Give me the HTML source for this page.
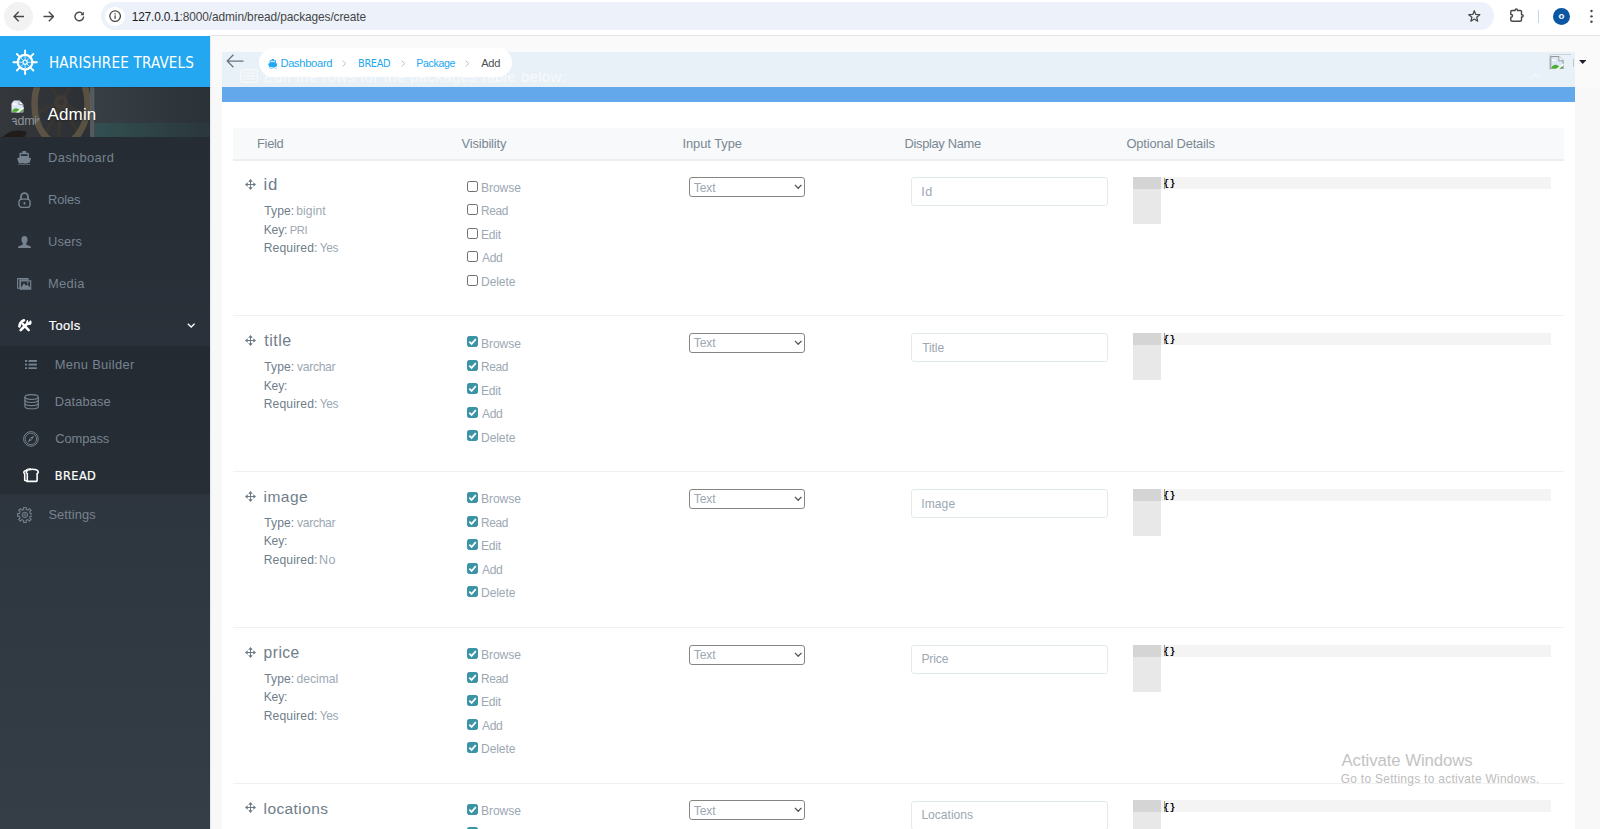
<!DOCTYPE html>
<html lang="en">
<head>
<meta charset="utf-8">
<title>Voyager - BREAD Package Add</title>
<style>
*{box-sizing:border-box;margin:0;padding:0}
html,body{width:1600px;height:829px;overflow:hidden}
body{font-family:"Liberation Sans",sans-serif;background:#f8f8f8;color:#76838f;position:relative;font-size:12px}
div,span,svg{position:absolute}
span{white-space:nowrap;line-height:20px}
/* browser chrome */
#chrome{left:0;top:0;width:1600px;height:36px;background:#fff}
#chromeline{left:210px;top:35px;width:1390px;height:1px;background:#e4e4e4}
#backbg{left:4px;top:2px;width:29px;height:29px;border-radius:50%;background:#f2f2f2}
#urlbar{left:101px;top:2px;width:1393px;height:28px;border-radius:14px;background:#edf1fa}
#infobg{left:105px;top:6.5px;width:19.5px;height:19.5px;border-radius:50%;background:#fff}
#profile{left:1552.5px;top:7.5px;width:17px;height:17px;border-radius:50%;background:#0b57a4}
#sep{left:1538px;top:10px;width:1px;height:13px;background:#c3d5f3}
/* sidebar */
#side{left:0;top:36px;width:210px;height:793px;background:linear-gradient(180deg,#232a32 0px,#252c34 102px,#353d47 793px);box-shadow:1px 0 1px rgba(0,0,0,.06)}
#brand{left:0;top:36px;width:210px;height:50.8px;background:#22a7f0}
#user{left:0;top:86px;width:210px;height:50.6px;background:#23292f;overflow:hidden}
#sub{left:0;top:346px;width:210px;height:148px;background:rgba(0,0,0,.13)}
/* main */
#panel{left:222px;top:52px;width:1353px;height:777px;background:#fff}
#phead{left:222px;top:52px;width:1353px;height:50px;background:#62a8ea}
#navov{left:210px;top:36px;width:1390px;height:50.8px;background:rgba(249,249,249,.885)}
#crumb{left:258.7px;top:47.8px;width:253.8px;height:29.2px;border-radius:14.6px;background:#fff}
#thead{left:233px;top:128px;width:1331px;height:33px;background:#f7f9fb;border-bottom:2px solid #eceff1}
.rs{left:233px;width:1331px;height:1px;background:#f0f0f0}
.cb{width:11px;height:11px;border:1px solid #6f6f6f;border-radius:2.2px;background:#fff}
.cb.on{background:#3b93a6;border-color:#3b93a6}
.sel{width:116px;height:20px;border:1px solid #858585;border-radius:3px;background:#fff}
.inp{width:196.6px;height:29px;border:1px solid #e2eaec;border-radius:3px;background:#fff}
.gut{width:27.6px;height:47px;background:#e8e8e8}
.gl{width:27.6px;height:12px;background:#d5d5d5}
.al{width:390.4px;height:12px;background:#f4f4f4}
.cur{width:1px;height:11px;background:#9a9a9a}
</style>
</head>
<body>

<div id="panel"></div><div id="phead"></div>
<svg style="left:239.5px;top:69px" width="18" height="14" viewBox="0 0 18 14"><g opacity=".8"><rect x=".7" y=".7" width="16.6" height="12.6" rx="1.5" fill="none" stroke="#fff" stroke-width="1.4"/><path d="M3 4.2H15M3 7H15M3 9.8H15" stroke="#fff" stroke-width="1.3"/></g></svg>
<span style="left:263.81px;top:67.00px;font-size:14.87px;letter-spacing:0.452px;color:rgba(255,255,255,.85);">Edit the rows for the packages table below:</span>
<svg style="left:1530px;top:73px" width="10" height="6" viewBox="0 0 10 6"><path d="M1 5 L5 1 L9 5" fill="none" stroke="#fff" stroke-width="1.4" opacity=".6"/></svg>
<div id="thead"></div>
<span style="left:256.97px;top:134.00px;font-size:12.9px;letter-spacing:-0.281px;color:#7a8792;">Field</span>
<span style="left:461.57px;top:134.00px;font-size:12.9px;letter-spacing:-0.171px;color:#7a8792;">Visibility</span>
<span style="left:682.44px;top:134.00px;font-size:12.9px;letter-spacing:-0.053px;color:#7a8792;">Input Type</span>
<span style="left:904.57px;top:134.00px;font-size:12.9px;letter-spacing:-0.335px;color:#7a8792;">Display Name</span>
<span style="left:1126.42px;top:134.00px;font-size:12.9px;letter-spacing:-0.163px;color:#7a8792;">Optional Details</span>
<svg style="left:245.2px;top:179.1px" viewBox="0 0 12 12" width="11" height="11"><path d="M6 0L8.500 2.900H6.550V5.450H9.100V3.500L12 6L9.100 8.500V6.550H6.550V9.100H8.500L6 12L3.500 9.100H5.450V6.550H2.900V8.500L0 6L2.900 3.500V5.450H5.450V2.900H3.500Z" fill="#6c7a86"/></svg>
<span style="left:263.50px;top:175.00px;font-size:16.89px;letter-spacing:0.821px;color:#707e8a;">id</span>
<span style="left:264.36px;top:201.00px;font-size:12.1px;letter-spacing:0.037px;color:#707e8a;">Type:</span>
<span style="left:296.24px;top:201.00px;font-size:12.1px;letter-spacing:0.100px;color:#9ca8b3;">bigint</span>
<span style="left:263.63px;top:220.00px;font-size:12.1px;letter-spacing:-0.114px;color:#707e8a;">Key:</span>
<span style="left:289.71px;top:220.00px;font-size:11.15px;letter-spacing:-0.349px;color:#9ca8b3;">PRI</span>
<span style="left:263.63px;top:238.00px;font-size:12.1px;letter-spacing:0.175px;color:#707e8a;">Required:</span>
<span style="left:319.76px;top:238.00px;font-size:11.85px;letter-spacing:-0.347px;color:#9ca8b3;">Yes</span>
<div class="cb" style="left:467px;top:180.6px"></div>
<span style="left:481.03px;top:178.00px;font-size:12.1px;letter-spacing:-0.088px;color:#9ca8b3;">Browse</span>
<div class="cb" style="left:467px;top:204.1px"></div>
<span style="left:481.05px;top:201.00px;font-size:11.86px;letter-spacing:-0.352px;color:#9ca8b3;">Read</span>
<div class="cb" style="left:467px;top:227.6px"></div>
<span style="left:481.03px;top:225.00px;font-size:12.1px;letter-spacing:-0.271px;color:#9ca8b3;">Edit</span>
<div class="cb" style="left:467px;top:251.1px"></div>
<span style="left:482.00px;top:248.00px;font-size:12.07px;letter-spacing:-0.350px;color:#9ca8b3;">Add</span>
<div class="cb" style="left:467px;top:274.6px"></div>
<span style="left:481.03px;top:272.00px;font-size:12.1px;letter-spacing:-0.097px;color:#9ca8b3;">Delete</span>
<div class="sel" style="left:689px;top:177.0px"><svg style="left:104px;top:6px" viewBox="0 0 9 6" width="8.4" height="5.6"><path d="M1 1 L4.5 4.6 L8 1" fill="none" stroke="#505050" stroke-width="1.350"/></svg></div>
<span style="left:693.76px;top:178.00px;font-size:12.1px;letter-spacing:-0.090px;color:#9ca8b3;">Text</span>
<div class="inp" style="left:911px;top:177.3px"></div>
<span style="left:921.27px;top:182.00px;font-size:12.57px;letter-spacing:0.452px;color:#9ca8b3;">Id</span>
<div class="gut" style="left:1133px;top:177.0px"></div><div class="gl" style="left:1133px;top:177.0px"></div><div class="al" style="left:1160.6px;top:177.0px"></div><div class="cur" style="left:1164px;top:177.5px"></div>
<span style="left:1163.41px;top:174.00px;font-size:9.6px;letter-spacing:0.356px;color:#000;font-family:'Liberation Mono',monospace;font-weight:bold;">{}</span>
<div class="rs" style="top:315.2px"></div>
<svg style="left:245.2px;top:334.9px" viewBox="0 0 12 12" width="11" height="11"><path d="M6 0L8.500 2.900H6.550V5.450H9.100V3.500L12 6L9.100 8.500V6.550H6.550V9.100H8.500L6 12L3.500 9.100H5.450V6.550H2.900V8.500L0 6L2.900 3.500V5.450H5.450V2.900H3.500Z" fill="#6c7a86"/></svg>
<span style="left:264.36px;top:330.00px;font-size:16.03px;letter-spacing:0.449px;color:#707e8a;">title</span>
<span style="left:264.36px;top:357.00px;font-size:12.1px;letter-spacing:0.037px;color:#707e8a;">Type:</span>
<span style="left:296.97px;top:357.00px;font-size:12.1px;letter-spacing:-0.290px;color:#9ca8b3;">varchar</span>
<span style="left:263.63px;top:376.00px;font-size:12.1px;letter-spacing:-0.114px;color:#707e8a;">Key:</span>
<span style="left:263.63px;top:394.00px;font-size:12.1px;letter-spacing:0.175px;color:#707e8a;">Required:</span>
<span style="left:319.76px;top:394.00px;font-size:11.85px;letter-spacing:-0.347px;color:#9ca8b3;">Yes</span>
<div class="cb on" style="left:467px;top:336.4px"><svg style="left:-1px;top:-1px" viewBox="0 0 11 11" width="11" height="11"><path d="M2.3 5.6 L4.6 7.9 L8.8 3.1" fill="none" stroke="#fff" stroke-width="1.7"/></svg></div>
<span style="left:481.03px;top:334.00px;font-size:12.1px;letter-spacing:-0.088px;color:#9ca8b3;">Browse</span>
<div class="cb on" style="left:467px;top:359.9px"><svg style="left:-1px;top:-1px" viewBox="0 0 11 11" width="11" height="11"><path d="M2.3 5.6 L4.6 7.9 L8.8 3.1" fill="none" stroke="#fff" stroke-width="1.7"/></svg></div>
<span style="left:481.05px;top:357.00px;font-size:11.86px;letter-spacing:-0.352px;color:#9ca8b3;">Read</span>
<div class="cb on" style="left:467px;top:383.4px"><svg style="left:-1px;top:-1px" viewBox="0 0 11 11" width="11" height="11"><path d="M2.3 5.6 L4.6 7.9 L8.8 3.1" fill="none" stroke="#fff" stroke-width="1.7"/></svg></div>
<span style="left:481.03px;top:381.00px;font-size:12.1px;letter-spacing:-0.271px;color:#9ca8b3;">Edit</span>
<div class="cb on" style="left:467px;top:406.9px"><svg style="left:-1px;top:-1px" viewBox="0 0 11 11" width="11" height="11"><path d="M2.3 5.6 L4.6 7.9 L8.8 3.1" fill="none" stroke="#fff" stroke-width="1.7"/></svg></div>
<span style="left:482.00px;top:404.00px;font-size:12.07px;letter-spacing:-0.350px;color:#9ca8b3;">Add</span>
<div class="cb on" style="left:467px;top:430.4px"><svg style="left:-1px;top:-1px" viewBox="0 0 11 11" width="11" height="11"><path d="M2.3 5.6 L4.6 7.9 L8.8 3.1" fill="none" stroke="#fff" stroke-width="1.7"/></svg></div>
<span style="left:481.03px;top:428.00px;font-size:12.1px;letter-spacing:-0.097px;color:#9ca8b3;">Delete</span>
<div class="sel" style="left:689px;top:332.8px"><svg style="left:104px;top:6px" viewBox="0 0 9 6" width="8.4" height="5.6"><path d="M1 1 L4.5 4.6 L8 1" fill="none" stroke="#505050" stroke-width="1.350"/></svg></div>
<span style="left:693.76px;top:333.00px;font-size:12.1px;letter-spacing:-0.090px;color:#9ca8b3;">Text</span>
<div class="inp" style="left:911px;top:333.1px"></div>
<span style="left:922.16px;top:338.00px;font-size:12.1px;letter-spacing:-0.107px;color:#9ca8b3;">Title</span>
<div class="gut" style="left:1133px;top:332.8px"></div><div class="gl" style="left:1133px;top:332.8px"></div><div class="al" style="left:1160.6px;top:332.8px"></div><div class="cur" style="left:1164px;top:333.3px"></div>
<span style="left:1163.41px;top:330.00px;font-size:9.6px;letter-spacing:0.356px;color:#000;font-family:'Liberation Mono',monospace;font-weight:bold;">{}</span>
<div class="rs" style="top:471.1px"></div>
<svg style="left:245.2px;top:490.8px" viewBox="0 0 12 12" width="11" height="11"><path d="M6 0L8.500 2.900H6.550V5.450H9.100V3.500L12 6L9.100 8.500V6.550H6.550V9.100H8.500L6 12L3.500 9.100H5.450V6.550H2.900V8.500L0 6L2.900 3.500V5.450H5.450V2.900H3.500Z" fill="#6c7a86"/></svg>
<span style="left:263.59px;top:487.00px;font-size:15.53px;letter-spacing:0.447px;color:#707e8a;">image</span>
<span style="left:264.36px;top:513.00px;font-size:12.1px;letter-spacing:0.037px;color:#707e8a;">Type:</span>
<span style="left:296.97px;top:513.00px;font-size:12.1px;letter-spacing:-0.290px;color:#9ca8b3;">varchar</span>
<span style="left:263.63px;top:531.00px;font-size:12.1px;letter-spacing:-0.114px;color:#707e8a;">Key:</span>
<span style="left:263.63px;top:550.00px;font-size:12.1px;letter-spacing:0.175px;color:#707e8a;">Required:</span>
<span style="left:318.99px;top:550.00px;font-size:12.57px;letter-spacing:0.450px;color:#9ca8b3;">No</span>
<div class="cb on" style="left:467px;top:492.3px"><svg style="left:-1px;top:-1px" viewBox="0 0 11 11" width="11" height="11"><path d="M2.3 5.6 L4.6 7.9 L8.8 3.1" fill="none" stroke="#fff" stroke-width="1.7"/></svg></div>
<span style="left:481.03px;top:489.00px;font-size:12.1px;letter-spacing:-0.088px;color:#9ca8b3;">Browse</span>
<div class="cb on" style="left:467px;top:515.8px"><svg style="left:-1px;top:-1px" viewBox="0 0 11 11" width="11" height="11"><path d="M2.3 5.6 L4.6 7.9 L8.8 3.1" fill="none" stroke="#fff" stroke-width="1.7"/></svg></div>
<span style="left:481.05px;top:513.00px;font-size:11.86px;letter-spacing:-0.352px;color:#9ca8b3;">Read</span>
<div class="cb on" style="left:467px;top:539.3px"><svg style="left:-1px;top:-1px" viewBox="0 0 11 11" width="11" height="11"><path d="M2.3 5.6 L4.6 7.9 L8.8 3.1" fill="none" stroke="#fff" stroke-width="1.7"/></svg></div>
<span style="left:481.03px;top:536.00px;font-size:12.1px;letter-spacing:-0.271px;color:#9ca8b3;">Edit</span>
<div class="cb on" style="left:467px;top:562.8px"><svg style="left:-1px;top:-1px" viewBox="0 0 11 11" width="11" height="11"><path d="M2.3 5.6 L4.6 7.9 L8.8 3.1" fill="none" stroke="#fff" stroke-width="1.7"/></svg></div>
<span style="left:482.00px;top:560.00px;font-size:12.07px;letter-spacing:-0.350px;color:#9ca8b3;">Add</span>
<div class="cb on" style="left:467px;top:586.3px"><svg style="left:-1px;top:-1px" viewBox="0 0 11 11" width="11" height="11"><path d="M2.3 5.6 L4.6 7.9 L8.8 3.1" fill="none" stroke="#fff" stroke-width="1.7"/></svg></div>
<span style="left:481.03px;top:583.00px;font-size:12.1px;letter-spacing:-0.097px;color:#9ca8b3;">Delete</span>
<div class="sel" style="left:689px;top:488.7px"><svg style="left:104px;top:6px" viewBox="0 0 9 6" width="8.4" height="5.6"><path d="M1 1 L4.5 4.6 L8 1" fill="none" stroke="#505050" stroke-width="1.350"/></svg></div>
<span style="left:693.76px;top:489.00px;font-size:12.1px;letter-spacing:-0.090px;color:#9ca8b3;">Text</span>
<div class="inp" style="left:911px;top:489.0px"></div>
<span style="left:921.31px;top:494.00px;font-size:12.1px;letter-spacing:0.049px;color:#9ca8b3;">Image</span>
<div class="gut" style="left:1133px;top:488.7px"></div><div class="gl" style="left:1133px;top:488.7px"></div><div class="al" style="left:1160.6px;top:488.7px"></div><div class="cur" style="left:1164px;top:489.2px"></div>
<span style="left:1163.41px;top:486.00px;font-size:9.6px;letter-spacing:0.356px;color:#000;font-family:'Liberation Mono',monospace;font-weight:bold;">{}</span>
<div class="rs" style="top:626.9px"></div>
<svg style="left:245.2px;top:646.6px" viewBox="0 0 12 12" width="11" height="11"><path d="M6 0L8.500 2.900H6.550V5.450H9.100V3.500L12 6L9.100 8.500V6.550H6.550V9.100H8.500L6 12L3.500 9.100H5.450V6.550H2.900V8.500L0 6L2.900 3.500V5.450H5.450V2.900H3.500Z" fill="#6c7a86"/></svg>
<span style="left:263.62px;top:643.00px;font-size:15.61px;letter-spacing:0.451px;color:#707e8a;">price</span>
<span style="left:264.36px;top:669.00px;font-size:12.1px;letter-spacing:0.037px;color:#707e8a;">Type:</span>
<span style="left:296.52px;top:669.00px;font-size:12.1px;letter-spacing:-0.002px;color:#9ca8b3;">decimal</span>
<span style="left:263.63px;top:687.00px;font-size:12.1px;letter-spacing:-0.114px;color:#707e8a;">Key:</span>
<span style="left:263.63px;top:706.00px;font-size:12.1px;letter-spacing:0.175px;color:#707e8a;">Required:</span>
<span style="left:319.76px;top:706.00px;font-size:11.85px;letter-spacing:-0.347px;color:#9ca8b3;">Yes</span>
<div class="cb on" style="left:467px;top:648.1px"><svg style="left:-1px;top:-1px" viewBox="0 0 11 11" width="11" height="11"><path d="M2.3 5.6 L4.6 7.9 L8.8 3.1" fill="none" stroke="#fff" stroke-width="1.7"/></svg></div>
<span style="left:481.03px;top:645.00px;font-size:12.1px;letter-spacing:-0.088px;color:#9ca8b3;">Browse</span>
<div class="cb on" style="left:467px;top:671.6px"><svg style="left:-1px;top:-1px" viewBox="0 0 11 11" width="11" height="11"><path d="M2.3 5.6 L4.6 7.9 L8.8 3.1" fill="none" stroke="#fff" stroke-width="1.7"/></svg></div>
<span style="left:481.05px;top:669.00px;font-size:11.86px;letter-spacing:-0.352px;color:#9ca8b3;">Read</span>
<div class="cb on" style="left:467px;top:695.1px"><svg style="left:-1px;top:-1px" viewBox="0 0 11 11" width="11" height="11"><path d="M2.3 5.6 L4.6 7.9 L8.8 3.1" fill="none" stroke="#fff" stroke-width="1.7"/></svg></div>
<span style="left:481.03px;top:692.00px;font-size:12.1px;letter-spacing:-0.271px;color:#9ca8b3;">Edit</span>
<div class="cb on" style="left:467px;top:718.6px"><svg style="left:-1px;top:-1px" viewBox="0 0 11 11" width="11" height="11"><path d="M2.3 5.6 L4.6 7.9 L8.8 3.1" fill="none" stroke="#fff" stroke-width="1.7"/></svg></div>
<span style="left:482.00px;top:716.00px;font-size:12.07px;letter-spacing:-0.350px;color:#9ca8b3;">Add</span>
<div class="cb on" style="left:467px;top:742.1px"><svg style="left:-1px;top:-1px" viewBox="0 0 11 11" width="11" height="11"><path d="M2.3 5.6 L4.6 7.9 L8.8 3.1" fill="none" stroke="#fff" stroke-width="1.7"/></svg></div>
<span style="left:481.03px;top:739.00px;font-size:12.1px;letter-spacing:-0.097px;color:#9ca8b3;">Delete</span>
<div class="sel" style="left:689px;top:644.5px"><svg style="left:104px;top:6px" viewBox="0 0 9 6" width="8.4" height="5.6"><path d="M1 1 L4.5 4.6 L8 1" fill="none" stroke="#505050" stroke-width="1.350"/></svg></div>
<span style="left:693.76px;top:645.00px;font-size:12.1px;letter-spacing:-0.090px;color:#9ca8b3;">Text</span>
<div class="inp" style="left:911px;top:644.8px"></div>
<span style="left:921.43px;top:649.00px;font-size:12.1px;letter-spacing:-0.119px;color:#9ca8b3;">Price</span>
<div class="gut" style="left:1133px;top:644.5px"></div><div class="gl" style="left:1133px;top:644.5px"></div><div class="al" style="left:1160.6px;top:644.5px"></div><div class="cur" style="left:1164px;top:645.0px"></div>
<span style="left:1163.41px;top:642.00px;font-size:9.6px;letter-spacing:0.356px;color:#000;font-family:'Liberation Mono',monospace;font-weight:bold;">{}</span>
<div class="rs" style="top:782.7px"></div>
<svg style="left:245.2px;top:802.4px" viewBox="0 0 12 12" width="11" height="11"><path d="M6 0L8.500 2.900H6.550V5.450H9.100V3.500L12 6L9.100 8.500V6.550H6.550V9.100H8.500L6 12L3.500 9.100H5.450V6.550H2.900V8.500L0 6L2.900 3.500V5.450H5.450V2.900H3.500Z" fill="#6c7a86"/></svg>
<span style="left:263.59px;top:799.00px;font-size:15.5px;letter-spacing:0.395px;color:#707e8a;">locations</span>
<span style="left:264.36px;top:824.00px;font-size:12.1px;letter-spacing:0.037px;color:#707e8a;">Type:</span>
<span style="left:296.81px;top:824.00px;font-size:12.34px;letter-spacing:0.450px;color:#9ca8b3;">text</span>
<span style="left:263.63px;top:843.00px;font-size:12.1px;letter-spacing:-0.114px;color:#707e8a;">Key:</span>
<span style="left:263.63px;top:862.00px;font-size:12.1px;letter-spacing:0.175px;color:#707e8a;">Required:</span>
<span style="left:319.76px;top:862.00px;font-size:11.85px;letter-spacing:-0.347px;color:#9ca8b3;">Yes</span>
<div class="cb on" style="left:467px;top:803.9px"><svg style="left:-1px;top:-1px" viewBox="0 0 11 11" width="11" height="11"><path d="M2.3 5.6 L4.6 7.9 L8.8 3.1" fill="none" stroke="#fff" stroke-width="1.7"/></svg></div>
<span style="left:481.03px;top:801.00px;font-size:12.1px;letter-spacing:-0.088px;color:#9ca8b3;">Browse</span>
<div class="cb on" style="left:467px;top:827.4px"><svg style="left:-1px;top:-1px" viewBox="0 0 11 11" width="11" height="11"><path d="M2.3 5.6 L4.6 7.9 L8.8 3.1" fill="none" stroke="#fff" stroke-width="1.7"/></svg></div>
<span style="left:481.05px;top:825.00px;font-size:11.86px;letter-spacing:-0.352px;color:#9ca8b3;">Read</span>
<div class="cb on" style="left:467px;top:850.9px"><svg style="left:-1px;top:-1px" viewBox="0 0 11 11" width="11" height="11"><path d="M2.3 5.6 L4.6 7.9 L8.8 3.1" fill="none" stroke="#fff" stroke-width="1.7"/></svg></div>
<span style="left:481.03px;top:848.00px;font-size:12.1px;letter-spacing:-0.271px;color:#9ca8b3;">Edit</span>
<div class="cb on" style="left:467px;top:874.4px"><svg style="left:-1px;top:-1px" viewBox="0 0 11 11" width="11" height="11"><path d="M2.3 5.6 L4.6 7.9 L8.8 3.1" fill="none" stroke="#fff" stroke-width="1.7"/></svg></div>
<span style="left:482.00px;top:872.00px;font-size:12.07px;letter-spacing:-0.350px;color:#9ca8b3;">Add</span>
<div class="cb on" style="left:467px;top:897.9px"><svg style="left:-1px;top:-1px" viewBox="0 0 11 11" width="11" height="11"><path d="M2.3 5.6 L4.6 7.9 L8.8 3.1" fill="none" stroke="#fff" stroke-width="1.7"/></svg></div>
<span style="left:481.03px;top:895.00px;font-size:12.1px;letter-spacing:-0.097px;color:#9ca8b3;">Delete</span>
<div class="sel" style="left:689px;top:800.3px"><svg style="left:104px;top:6px" viewBox="0 0 9 6" width="8.4" height="5.6"><path d="M1 1 L4.5 4.6 L8 1" fill="none" stroke="#505050" stroke-width="1.350"/></svg></div>
<span style="left:693.76px;top:801.00px;font-size:12.1px;letter-spacing:-0.090px;color:#9ca8b3;">Text</span>
<div class="inp" style="left:911px;top:800.6px"></div>
<span style="left:921.43px;top:805.00px;font-size:12.1px;letter-spacing:-0.025px;color:#9ca8b3;">Locations</span>
<div class="gut" style="left:1133px;top:800.3px"></div><div class="gl" style="left:1133px;top:800.3px"></div><div class="al" style="left:1160.6px;top:800.3px"></div><div class="cur" style="left:1164px;top:800.8px"></div>
<span style="left:1163.41px;top:798.00px;font-size:9.6px;letter-spacing:0.356px;color:#000;font-family:'Liberation Mono',monospace;font-weight:bold;">{}</span>
<div id="navov"></div>
<svg style="left:226.4px;top:54.300px" width="18" height="14" viewBox="0 0 18 14"><path d="M17.500 7H1.500M7.400 .8L1.200 7L7.400 13.200" fill="none" stroke="#66727d" stroke-width="1.250"/></svg>
<div id="crumb"></div>
<svg style="left:268.4px;top:59.2px" width="9.500" height="9.400" viewBox="0 0 14.200 14"><g fill="#22a7f0"><path d="M5.400 0h3.600v2.100H5.400z"/><path fill-rule="evenodd" d="M3.400 1.800h7.600a.9.9 0 0 1 .9.9v4.300H2.500v-4.300a.9.9 0 0 1 .9-.9zM3.900 3.300v1.700h6.600V3.300z"/><path d="M.1 7.200L7.100 5L14.100 7.200L12.600 11.700Q7.100 12.700 1.600 11.700Z"/></g><path d="M1.200 13.400q1.500-1.300 2.950 0t2.950 0t2.950 0t2.950 0" fill="none" stroke="#22a7f0" stroke-width=".9"/></svg>
<span style="left:280.40px;top:53.00px;font-size:11.2px;letter-spacing:-0.322px;color:#22a7f0;">Dashboard</span>
<span style="left:358.05px;top:54.00px;font-size:10.88px;letter-spacing:-0.349px;color:#22a7f0;font-family:'DejaVu Sans Condensed','DejaVu Sans',sans-serif;">BREAD</span>
<span style="left:416.25px;top:53.00px;font-size:10.62px;letter-spacing:-0.352px;color:#22a7f0;">Package</span>
<span style="left:481.30px;top:53.00px;font-size:11.08px;letter-spacing:-0.351px;color:#4f4f4f;">Add</span>
<svg style="left:341.9px;top:60px" width="4.6" height="7" viewBox="0 0 4.6 7"><path d="M.6 .6L3.8 3.5L.6 6.4" fill="none" stroke="#b9bfc6" stroke-width="1"/></svg>
<svg style="left:400.6px;top:60px" width="4.6" height="7" viewBox="0 0 4.6 7"><path d="M.6 .6L3.8 3.5L.6 6.4" fill="none" stroke="#b9bfc6" stroke-width="1"/></svg>
<svg style="left:465px;top:60px" width="4.6" height="7" viewBox="0 0 4.6 7"><path d="M.6 .6L3.8 3.5L.6 6.4" fill="none" stroke="#b9bfc6" stroke-width="1"/></svg>
<div style="left:1549px;top:54px;width:22px;height:16px;border-left:1px solid #cfd3d8;border-top:1px solid #cfd3d8;border-radius:3px 0 0 0"></div><div style="left:1573px;top:59px;width:1px;height:8px;background:#c4c8cc"></div>
<svg style="left:1550.2px;top:55.6px" width="13.9" height="13.4" viewBox="0 0 14 14"><path d="M.5 .5H9L13.5 5V13.5H.5Z" fill="#dbe6f8" stroke="#8e8e8e" stroke-width="1"/><path d="M9 .5V5H13.5" fill="#fff" stroke="#8e8e8e" stroke-width=".9"/><path d="M2 4.2c.6-1.3 2.2-1.3 2.8 0 .9-.4 1.600.1 1.600 1H1.800c-.3-.5-.2-.9.200-1z" fill="#fff"/><path d="M1 13C2.500 8.200 8 7.500 10.500 13Z" fill="#4caf2a"/><path d="M5.500 14L14 7.600V10L8.700 14Z" fill="#fff"/><path d="M9.500 13L13 10.400V13Z" fill="#4caf2a"/></svg>
<svg style="left:1579px;top:60.3px" width="7.4" height="4" viewBox="0 0 7.4 4"><path d="M0 0H7.4L3.700 4Z" fill="#1c1f2b"/></svg>
<div id="side"></div><div id="user">
<svg style="left:0;top:0" width="210" height="52" viewBox="0 0 210 52"><defs><linearGradient id="ug" x1="0" x2="1"><stop offset="0" stop-color="#34373b"/><stop offset=".42" stop-color="#2c3034"/><stop offset=".46" stop-color="#373e44"/><stop offset="1" stop-color="#2a3137"/></linearGradient><linearGradient id="tg" x1="0" x2="1"><stop offset="0" stop-color="#2d5f5c"/><stop offset="1" stop-color="#2a3c40"/></linearGradient></defs><rect width="210" height="52" fill="url(#ug)"/><rect x="95" y="37" width="115" height="14" fill="url(#tg)" opacity=".5"/><g fill="none" opacity=".62"><path d="M61 16L40 60M61 16L58 60M61 16L84 58M61 16L30 30M61 16L96 34M61 16L46 -6M61 16L74 -6" stroke="#3f3830" stroke-width="3.600"/><ellipse cx="61" cy="18" rx="26.500" ry="40" stroke="#75664c" stroke-width="6.500"/><circle cx="61" cy="16" r="5" stroke="#4a4136" stroke-width="4"/></g><rect x="90" y="0" width="4.500" height="52" fill="#5d6468" opacity=".8"/><path d="M2 52C8 44 20 43 27 46L24 52Z" fill="#201c19"/><rect x="0" y="0" width="210" height="1.200" fill="#1c1f23"/></svg>
</div>
<div id="brand"></div>
<svg style="left:0;top:0" width="60" height="90" viewBox="0 0 60 90"><g fill="none" stroke="#fff"><circle cx="25.1" cy="62.25" r="7.300" stroke-width="2.300"/><circle cx="25.1" cy="62.25" r="2.100" stroke-width="1.300"/><path d="M27.80 62.25L31.50 62.25M27.01 64.16L29.63 66.78M25.10 64.95L25.10 68.65M23.19 64.16L20.57 66.78M22.40 62.25L18.70 62.25M23.19 60.34L20.57 57.72M25.10 59.55L25.10 55.85M27.01 60.34L29.63 57.72" stroke-width=".750"/><path d="M33.30 62.25L36.80 62.25M30.90 68.05L33.37 70.52M25.10 70.45L25.10 73.95M19.30 68.05L16.83 70.52M16.90 62.25L13.40 62.25M19.30 56.45L16.83 53.98M25.10 54.05L25.10 50.55M30.90 56.45L33.37 53.98" stroke-width="1.900" stroke-linecap="round"/></g></svg>
<span style="left:48.98px;top:53.00px;font-size:15.1px;letter-spacing:0.177px;color:#fff;font-family:'DejaVu Sans Condensed','DejaVu Sans',sans-serif;">HARISHREE TRAVELS</span>
<div style="left:9px;top:96px;width:32px;height:32px;border-radius:50%;overflow:hidden"><svg style="left:2.4px;top:4.2px" width="12.6" height="12.6" viewBox="0 0 14 14"><path d="M.5 .5H9L13.5 5V13.5H.5Z" fill="#dbe6f8" stroke="#8e8e8e" stroke-width="1"/><path d="M9 .5V5H13.5" fill="#fff" stroke="#8e8e8e" stroke-width=".9"/><path d="M2 4.2c.6-1.3 2.2-1.3 2.8 0 .9-.4 1.600.1 1.600 1H1.800c-.3-.5-.2-.9.200-1z" fill="#fff"/><path d="M1 13C2.500 8.200 8 7.500 10.500 13Z" fill="#4caf2a"/><path d="M5.500 14L14 7.600V10L8.700 14Z" fill="#fff"/><path d="M9.500 13L13 10.400V13Z" fill="#4caf2a"/></svg><span style="left:1.87px;top:15.00px;font-size:12.4px;letter-spacing:-0.214px;color:#8f969d;">admin</span></div>
<span style="left:47.40px;top:105.00px;font-size:17px;letter-spacing:0.178px;color:#fff;text-shadow:0 1px 2px rgba(0,0,0,.35);">Admin</span>
<svg style="left:17.3px;top:151px" width="14.2" height="14" viewBox="0 0 14.200 14" ><g fill="#76838f"><path d="M5.400 0h3.600v2.100H5.400z"/><path fill-rule="evenodd" d="M3.400 1.800h7.600a.9.9 0 0 1 .9.9v4.300H2.500v-4.300a.9.9 0 0 1 .9-.9zM3.900 3.300v1.700h6.600V3.300z"/><path d="M.1 7.200L7.100 5L14.100 7.200L12.600 11.700Q7.100 12.700 1.600 11.700Z"/></g><path d="M1.200 13.400q1.500-1.300 2.950 0t2.950 0t2.950 0t2.950 0" fill="none" stroke="#76838f" stroke-width=".9"/></svg>
<span style="left:47.97px;top:148.00px;font-size:12.9px;letter-spacing:0.357px;color:#76838f;">Dashboard</span>
<svg style="left:18px;top:191.6px" width="13" height="16.2" viewBox="0 0 13 16.2" ><g fill="none" stroke="#76838f" stroke-width="1.4"><path d="M3 7.200V4.700a3.500 3.500 0 0 1 7 0V7.200" stroke-width="1.800"/><rect x=".9" y="7.100" width="11.200" height="8.300" rx="3.200"/></g><rect x="5.600" y="10" width="1.800" height="2.600" rx=".6" fill="#76838f"/></svg>
<span style="left:47.97px;top:190.00px;font-size:12.9px;letter-spacing:-0.127px;color:#76838f;">Roles</span>
<svg style="left:18px;top:235.6px" width="13" height="12.8" viewBox="0 0 13 12.800" ><path d="M6.500 0C8.500 0 9.600 1.500 9.600 3.600C9.600 5.200 9 6.400 8.200 7.100V8c0 .5 .3 .8 .8 1l2.700 1c.9.4 1.300.9 1.300 1.900V12.800H0V11.900c0-1 .4-1.500 1.300-1.900L4 9c.5-.2.800-.5.800-1V7.100C4 6.400 3.400 5.200 3.400 3.600C3.400 1.500 4.500 0 6.500 0Z" fill="#76838f"/></svg>
<span style="left:48.03px;top:232.00px;font-size:12.9px;letter-spacing:0.079px;color:#76838f;">Users</span>
<svg style="left:17.3px;top:277.8px" width="14.4" height="11.8" viewBox="0 0 14.400 11.800" ><path d="M.6 .6H11V2.100H3V10.300H.6Z" fill="none" stroke="#76838f" stroke-width="1.100"/><path d="M2.700 2.200H14.300V11.700H2.700Z M3.900 3.400V9.700L7 5.300L9 7.700L10.500 6.500L13.100 9.500V3.400Z" fill="#76838f" fill-rule="evenodd"/><circle cx="10.700" cy="4.800" r=".85" fill="#76838f"/></svg>
<span style="left:47.97px;top:274.00px;font-size:12.9px;letter-spacing:0.320px;color:#76838f;">Media</span>
<svg style="left:17.5px;top:319.3px" width="14" height="12.7" viewBox="0 0 14 12.700" ><g stroke="#fff" fill="none" stroke-linecap="round"><path d="M2.700 11.100L10.200 3.700" stroke-width="2.700"/><path d="M10.700 11.100L4.700 5" stroke-width="2.500"/><path d="M1.400 7.400Q1.700 3.200 5.900 1.300" stroke-width="2.600"/></g><circle cx="10.900" cy="3.400" r="2.700" fill="#fff"/><path d="M10.500 3.600L13.800 -.4L9.600 -.6Z" fill="#2a313a"/></svg>
<span style="left:48.74px;top:316.00px;font-size:12.9px;letter-spacing:0.347px;color:#fff;-webkit-text-stroke:.2px #fff;">Tools</span>
<svg style="left:187px;top:323.2px" width="8.4" height="5" viewBox="0 0 8.4 5" ><path d="M.8 .7L4.200 4L7.600 .7" fill="none" stroke="#fff" stroke-width="1.350"/></svg>
<div id="sub"></div>
<svg style="left:25.3px;top:360.3px" width="11.9" height="9.2" viewBox="0 0 11.900 9.200" ><g fill="#76838f"><rect x="0" y="0" width="2.100" height="1.900"/><rect x="3.500" y="0" width="8.400" height="1.900"/><rect x="0" y="3.650" width="2.100" height="1.900"/><rect x="3.500" y="3.650" width="8.400" height="1.900"/><rect x="0" y="7.300" width="2.100" height="1.900"/><rect x="3.500" y="7.300" width="8.400" height="1.900"/></g></svg>
<span style="left:54.77px;top:355.00px;font-size:12.9px;letter-spacing:0.319px;color:#76838f;">Menu Builder</span>
<svg style="left:23.6px;top:394.2px" width="15.2" height="15.4" viewBox="0 0 15.200 15.400" ><g fill="none" stroke="#76838f" stroke-width="1.150"><ellipse cx="7.600" cy="3" rx="6.700" ry="2.400"/><path d="M.9 3V12.400c0 1.300 3 2.400 6.700 2.400s6.700-1.100 6.700-2.400V3"/><path d="M.9 6.100c0 1.300 3 2.400 6.700 2.400s6.700-1.100 6.700-2.400M.9 9.300c0 1.300 3 2.400 6.700 2.400s6.700-1.100 6.700-2.400"/></g></svg>
<span style="left:54.77px;top:392.00px;font-size:12.9px;letter-spacing:0.110px;color:#76838f;">Database</span>
<svg style="left:23.2px;top:431.1px" width="15.8" height="15.8" viewBox="0 0 15.800 15.800" ><g fill="none" stroke="#76838f"><circle cx="7.900" cy="7.900" r="7.300" stroke-width="1"/><circle cx="7.900" cy="7.900" r="5.700" stroke-width=".9"/></g><path d="M11.200 4.600L8.900 8.900L4.600 11.200L6.900 6.900Z" fill="#76838f"/><circle cx="7.900" cy="7.900" r=".8" fill="#262d35"/></svg>
<span style="left:55.15px;top:429.00px;font-size:12.9px;letter-spacing:-0.046px;color:#76838f;">Compass</span>
<svg style="left:23.4px;top:468.4px" width="15.8" height="14.2" viewBox="0 0 15.800 14.200" ><g fill="none" stroke="#fff" stroke-width="1.550"><path d="M4.300 2.900C2.800 2.600 1.300 2.700 .9 3.800.6 4.800 1.200 5.400 1.700 5.700V12.300L4.300 13.300"/><path d="M4.300 13.400V5.600C3.500 5.200 3.100 4.400 3.500 3.500 4.100 2 6.500 1.300 9.700 1.300s5 .8 5.400 2.200c.3 1-.2 1.800-1 2.200V12.600c0 .5-.3.800-.8.800Z"/><path d="M1.700 3.100C2.600 1.400 5.300 .7 8 .7" stroke-width="1"/></g></svg>
<span style="left:54.69px;top:466.00px;font-size:12.63px;letter-spacing:0.449px;color:#fff;font-family:'DejaVu Sans Condensed','DejaVu Sans',sans-serif;-webkit-text-stroke:.2px #fff;">BREAD</span>
<svg style="left:16.6px;top:507px" width="15.8" height="15.8" viewBox="0 0 15.800 15.800" ><g fill="none" stroke="#76838f"><path d="M6.60 0.31L9.20 0.31L9.12 2.43L10.90 3.17L12.35 1.61L14.19 3.45L12.63 4.90L13.36 6.68L15.49 6.60L15.49 9.20L13.37 9.12L12.63 10.90L14.19 12.35L12.35 14.19L10.90 12.63L9.12 13.36L9.20 15.49L6.60 15.49L6.68 13.37L4.90 12.63L3.45 14.19L1.61 12.35L3.17 10.90L2.44 9.12L0.31 9.20L0.31 6.60L2.43 6.68L3.17 4.90L1.61 3.45L3.45 1.61L4.90 3.17L6.68 2.44Z" stroke-width="1.050" stroke-linejoin="round"/><circle cx="7.900" cy="7.900" r="2.700" stroke-width="1"/><circle cx="7.900" cy="7.900" r="1.100" stroke-width=".8"/></g></svg>
<span style="left:48.42px;top:505.00px;font-size:12.9px;letter-spacing:0.090px;color:#76838f;">Settings</span>
<div id="chrome"></div><div id="chromeline"></div><div id="backbg"></div><div id="urlbar"></div><div id="infobg"></div>
<svg style="left:13px;top:10.5px" width="11.5" height="11" viewBox="0 0 11.500 11" ><path d="M11 5.500H1.300M5.700 .8L1 5.500L5.700 10.200" fill="none" stroke="#474747" stroke-width="1.350"/></svg>
<svg style="left:42.5px;top:10.5px" width="11.5" height="11" viewBox="0 0 11.500 11" ><path d="M.5 5.500H10.200M5.800 .8L10.500 5.500L5.800 10.200" fill="none" stroke="#474747" stroke-width="1.350"/></svg>
<svg style="left:73.5px;top:10.5px" width="11" height="11" viewBox="0 0 11 11" ><path d="M9.600 5.500A4.300 4.300 0 1 1 8.300 2.400" fill="none" stroke="#474747" stroke-width="1.350"/><path d="M9.900 .7V4.300H6.300Z" fill="#474747"/></svg>
<svg style="left:108.7px;top:10px" width="12.2" height="12.2" viewBox="0 0 12.200 12.200" ><circle cx="6.100" cy="6.100" r="5.300" fill="none" stroke="#474747" stroke-width="1.300"/><rect x="5.450" y="5.400" width="1.300" height="3.500" fill="#474747"/><rect x="5.450" y="3.200" width="1.300" height="1.300" fill="#474747"/></svg>
<span style="left:131.71px;top:7.00px;font-size:11.9px;letter-spacing:-0.158px;color:#1f1f1f;">127.0.0.1</span>
<span style="left:179.53px;top:7.00px;font-size:11.9px;letter-spacing:-0.096px;color:#444746;">:8000/admin/bread/packages/create</span>
<svg style="left:1468px;top:10.1px" width="12.6" height="12.6" viewBox="0 0 13 13" ><path d="M6.50 0.70L8.03 4.60L12.21 4.85L8.97 7.50L10.03 11.55L6.50 9.30L2.97 11.55L4.03 7.50L0.79 4.85L4.97 4.60Z" fill="none" stroke="#474747" stroke-width="1.250" stroke-linejoin="round"/></svg>
<svg style="left:1510px;top:8.3px" width="14.4" height="14" viewBox="0 0 14.400 14" ><path d="M.8 3.600a1.100 1.100 0 0 1 1.100-1.100H5.200V2a1.100 1.100 0 0 1 2.200 0V2.500H10.400a1.100 1.100 0 0 1 1.100 1.100V6.700H12a1.150 1.150 0 0 1 0 2.300H11.500V12.100a1.100 1.100 0 0 1-1.100 1.100H1.900a1.100 1.100 0 0 1-1.100-1.100V9.200H1.200a1.350 1.350 0 0 0 0-2.700H.8Z" fill="none" stroke="#474747" stroke-width="1.400" stroke-linejoin="round"/></svg>
<div id="sep"></div><div id="profile"></div>
<span style="left:1558.54px;top:6.00px;font-size:9.6px;letter-spacing:0.000px;color:#fff;font-family:'Liberation Sans',sans-serif;font-weight:bold;">o</span>
<svg style="left:1590px;top:8.6px" width="3" height="15" viewBox="0 0 3 15" ><circle cx="1.500" cy="2" r="1.200" fill="#474747"/><circle cx="1.500" cy="7.350" r="1.200" fill="#474747"/><circle cx="1.500" cy="12.700" r="1.200" fill="#474747"/></svg>
<span style="left:1341.50px;top:751.00px;font-size:16.8px;letter-spacing:-0.080px;color:#c3c3c3;">Activate Windows</span>
<span style="left:1340.70px;top:769.00px;font-size:11.9px;letter-spacing:0.318px;color:#bdbdbd;">Go to Settings to activate Windows.</span>
</body>
</html>
